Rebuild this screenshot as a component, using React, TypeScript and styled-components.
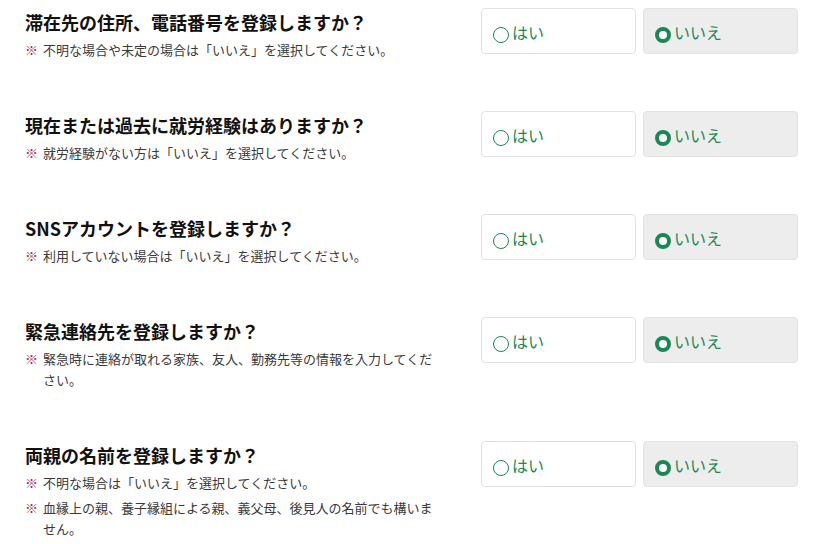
import styled, { createGlobalStyle } from 'styled-components';

const GlobalStyle = createGlobalStyle`
  body {
    margin: 0;
    background: #fff;
    font-family: "Noto Sans CJK JP", "Noto Sans", sans-serif;
    color: #333;
  }
`;

type Question = {
  title: string;
  notes: string[];
};

const questions: Question[] = [
  { title: '滞在先の住所、電話番号を登録しますか？', notes: ['不明な場合や未定の場合は「いいえ」を選択してください。'] },
  { title: '現在または過去に就労経験はありますか？', notes: ['就労経験がない方は「いいえ」を選択してください。'] },
  { title: 'SNSアカウントを登録しますか？', notes: ['利用していない場合は「いいえ」を選択してください。'] },
  { title: '緊急連絡先を登録しますか？', notes: ['緊急時に連絡が取れる家族、友人、勤務先等の情報を入力してください。'] },
  {
    title: '両親の名前を登録しますか？',
    notes: ['不明な場合は「いいえ」を選択してください。', '血縁上の親、養子縁組による親、義父母、後見人の名前でも構いません。'],
  },
];

export default function App() {
  return <Page>
    <GlobalStyle />
    {questions.map((q) => (
      <Row key={q.title}>
        <Text>
          <Title>{q.title}</Title>
          {q.notes.map((n) => (
            <Note key={n}>
              <Mark>※</Mark>
              <span>{n}</span>
            </Note>
          ))}
        </Text>
        <Choices>
          <Choice $active={false}>
            <Radio $checked={false} />
            はい
          </Choice>
          <Choice $active>
            <Radio $checked />
            いいえ
          </Choice>
        </Choices>
      </Row>
    ))}
  </Page>;
}

const Page = styled.div`
  padding: 8px 24px 0 25px;
`;

const Row = styled.div`
  display: flex;
  align-items: flex-start;
  justify-content: space-between;
  margin-bottom: 51px;

  &:last-child {
    margin-bottom: 0;
  }
`;

const Text = styled.div`
  width: 415px;
  display: flex;
  flex-direction: column;
  gap: 4px;
`;

const Title = styled.h2`
  margin: 0 0 -1px;
  font-size: 18px;
  line-height: 28px;
  font-weight: bold;
  color: #111;
`;

const Note = styled.p`
  margin: 0;
  display: flex;
  font-size: 13px;
  line-height: 21px;
  color: #3a3a3a;
`;

const Mark = styled.span`
  flex: none;
  width: 18px;
  color: #9c2f62;
`;

const Choices = styled.div`
  display: flex;
  gap: 7px;
`;

const Choice = styled.div<{ $active: boolean }>`
  width: 155px;
  height: 46px;
  box-sizing: border-box;
  display: flex;
  align-items: center;
  padding: 2px 0 0 11px;
  border: 1px solid #e2e2e2;
  border-radius: 4px;
  background: ${(p) => (p.$active ? '#ededed' : '#fff')};
  color: #1a8754;
  font-size: 16px;
`;

const Radio = styled.span<{ $checked: boolean }>`
  width: 16px;
  height: 16px;
  box-sizing: border-box;
  margin: 5px 3px 0 0;
  border-radius: 50%;
  border: ${(p) => (p.$checked ? '4.5px' : '1.5px')} solid #1a8754;
  background: #fff;
`;
